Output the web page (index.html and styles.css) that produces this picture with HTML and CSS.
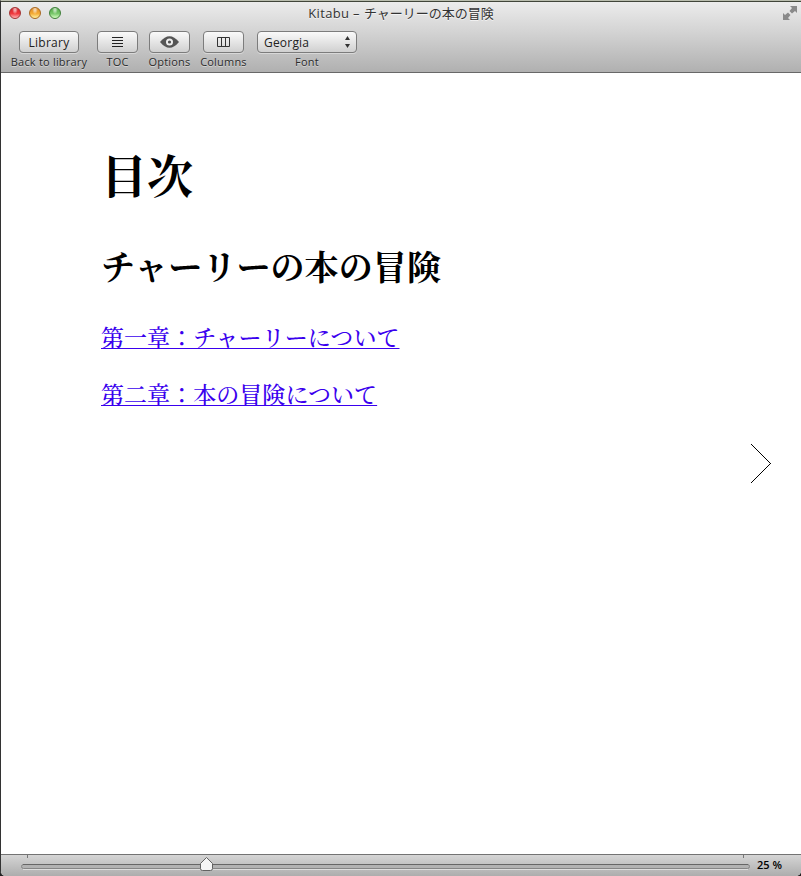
FILE: index.html
```
<!DOCTYPE html>
<html lang="ja">
<head>
<meta charset="utf-8">
<title>Kitabu</title>
<link rel="stylesheet" href="styles.css">
</head>
<body>
<div class="window">
  <header class="chrome">
    <div class="titlebar">
      <div class="lights"><i class="light red"></i><i class="light amber"></i><i class="light green"></i></div>
      <div class="title"><span class="app">Kitabu –</span><span class="book">チャーリーの本の冒険</span></div>
      <svg class="expand" width="14" height="14" viewBox="0 0 14 14"><path d="M7 0h7v7l-2-2-3 2.500L6.500 5 9 2zM0 7l2 2 3-2.500L7.500 9 5 12l2 2H0z" fill="#8a8a8a"/></svg>
    </div>
    <div class="toolbar">
      <div class="tool"><button class="btn library"><span class="library-text">Library</span></button><span class="label back">Back to library</span></div>
      <div class="tool"><button class="btn"><svg width="12" height="11" viewBox="0 0 12 11"><path d="M0 .5h11M0 3.500h11M0 6.500h11M0 9.500h11" stroke="#222"/></svg></button><span class="label toc">TOC</span></div>
      <div class="tool"><button class="btn"><svg width="20" height="12" viewBox="0 0 20 12"><path d="M0 6Q9.500-5.500 19 6 9.500 17.500 0 6z" fill="#555"/><circle cx="9.500" cy="6" r="3.500" fill="#eee"/><circle cx="9.500" cy="6" r="1.600" fill="#505050"/></svg></button><span class="label options">Options</span></div>
      <div class="tool"><button class="btn"><svg width="13" height="11" viewBox="0 0 13 11"><path d="M.5 .5h12v9H.5zM4.500 .5v9M8.500 .5v9" fill="none" stroke="#333"/></svg></button><span class="label columns">Columns</span></div>
      <div class="tool"><button class="btn font"><span class="font-text">Georgia</span><svg width="5" height="12" viewBox="0 0 5 12"><path d="M0 4L2.500 0 5 4zM0 8h5L2.500 12z" fill="#333"/></svg></button><span class="label font-label">Font</span></div>
    </div>
  </header>
  <main class="page">
    <div class="contents">
      <h1>目次</h1>
      <h2>チャーリーの本の冒険</h2>
      <p><a href="#one">第一章：チャーリーについて</a></p>
      <p><a href="#two">第二章：本の冒険について</a></p>
    </div>
    <svg class="next" width="20" height="39" viewBox="0 0 20 39" shape-rendering="crispEdges"><path d="M0 0L19.500 19.500 0 39" fill="none" stroke="#000"/></svg>
  </main>
  <footer class="status">
    <svg class="slider" width="730" height="21" viewBox="0 0 730 21">
      <path d="M6.500 0v3M722.500 0v3" stroke="#777"/>
      <rect x=".5" y="9.500" width="728" height="4" rx="2" fill="#b2b2b2" stroke="#868686"/>
      <path d="M2 9.500h725" stroke="#666"/><path d="M2 14.500h725" stroke="#ddd"/>
      <path d="M179.500 8.500l6-6 6 6v5q0 2-2 2h-8q-2 0-2-2z" fill="#f5f5f5" stroke="#626262"/>
    </svg>
    <span class="percent">25 %</span>
  </footer>
</div>
</body>
</html>
```
FILE: styles.css
```
* { box-sizing: border-box; }
body { margin: 0; background: #222; font-family: "Open Sans", "Noto Sans CJK JP", sans-serif; }
.window {
  width: 801px; height: 876px; display: flex; flex-direction: column;
  border-top: 1px solid #b9bdae; border-left: 1px solid #333;
  border-radius: 0 0 5px 5px; overflow: hidden; background: #fff;
}
.chrome {
  height: 72px; flex: none; border-top: 1px solid #41463a; border-bottom: 1px solid #686868;
  background: linear-gradient(#ececec, #d2d2d2 45%, #b0b0b0);
}
.titlebar { height: 22px; display: grid; grid-template-columns: 100px 1fr 100px; align-items: center; }
.lights { display: flex; gap: 8px; padding-left: 8px; }
.light { width: 12px; height: 12px; border-radius: 50%; border: 1px solid; }
.red { border-color: #a33232; background: radial-gradient(ellipse at 50% 15%, #fff9 0 12%, transparent 40%), linear-gradient(#cf2028, #f0393e 55%, #ffb5b5); }
.amber { border-color: #a86820; background: radial-gradient(ellipse at 50% 15%, #fff9 0 12%, transparent 40%), linear-gradient(#dc8520, #f5ac37 55%, #fff3a0); }
.green { border-color: #3e7f38; background: radial-gradient(ellipse at 50% 15%, #fff9 0 12%, transparent 40%), linear-gradient(#4fa544, #78c76a 55%, #d5ffc2); }
.title { display: flex; justify-content: center; align-items: center; gap: 4px; height: 22px; line-height: 22px; color: #333; white-space: nowrap; text-shadow: 0 1px #f4f4f4; }
.app { font-size: 13px; letter-spacing: .35px; }
.book { font-size: 13px; }
.expand { justify-self: end; margin-right: 4px; }
.toolbar { display: grid; grid-template-columns: 78px 41px 45px 45px 104px; gap: 9px; padding: 7px 0 0 9px; }
.tool { display: flex; flex-direction: column; align-items: center; }
.btn {
  width: 41px; height: 22px; padding: 0; display: flex; align-items: center; justify-content: center;
  border: 1px solid #7c7c7c; border-radius: 4px; background: linear-gradient(#fafafa, #d0d0d0);
  box-shadow: 0 1px #d8d8d8; font: 12px/20px "Open Sans", sans-serif; color: #222;
}
.library { width: 60px; letter-spacing: .25px; }
.library-text, .font-text { padding-top: 1px; }
.font { width: 100px; justify-content: space-between; padding: 0 6px; letter-spacing: .2px; }
.label { font-size: 11px; line-height: 16px; margin-top: 1px; color: #2c2c2c; white-space: nowrap; letter-spacing: .2px; text-shadow: 0 1px #d6d6d6; }
.page { flex: 1; display: flex; justify-content: space-between; padding-left: 100px; }
.contents { padding-top: 67px; font-family: "Noto Serif CJK JP", "Noto Sans CJK JP", serif; }
h1, h2, p { margin: 0; white-space: nowrap; }
h1 { font-size: 46px; line-height: 66px; color: #000; }
h2 { font-size: 34px; line-height: 50px; margin-top: 35px; letter-spacing: .1px; }
p { font-size: 23px; font-weight: 500; line-height: 34px; margin-top: 29px; letter-spacing: .05px; }
p + p { margin-top: 23px; }
a { color: #3a00ee; text-decoration: underline; text-decoration-thickness: 1px; text-underline-offset: 2px; text-decoration-skip-ink: none; }
.next { margin: 371px 30px 0 0; }
.status { height: 22px; flex: none; display: flex; padding-left: 20px; border-top: 1px solid #737373; background: linear-gradient(#d5d5d5, #adadad); }
.percent { margin-left: 6px; font-size: 11px; line-height: 20px; color: #000; font-weight: 600; white-space: nowrap; }
```
